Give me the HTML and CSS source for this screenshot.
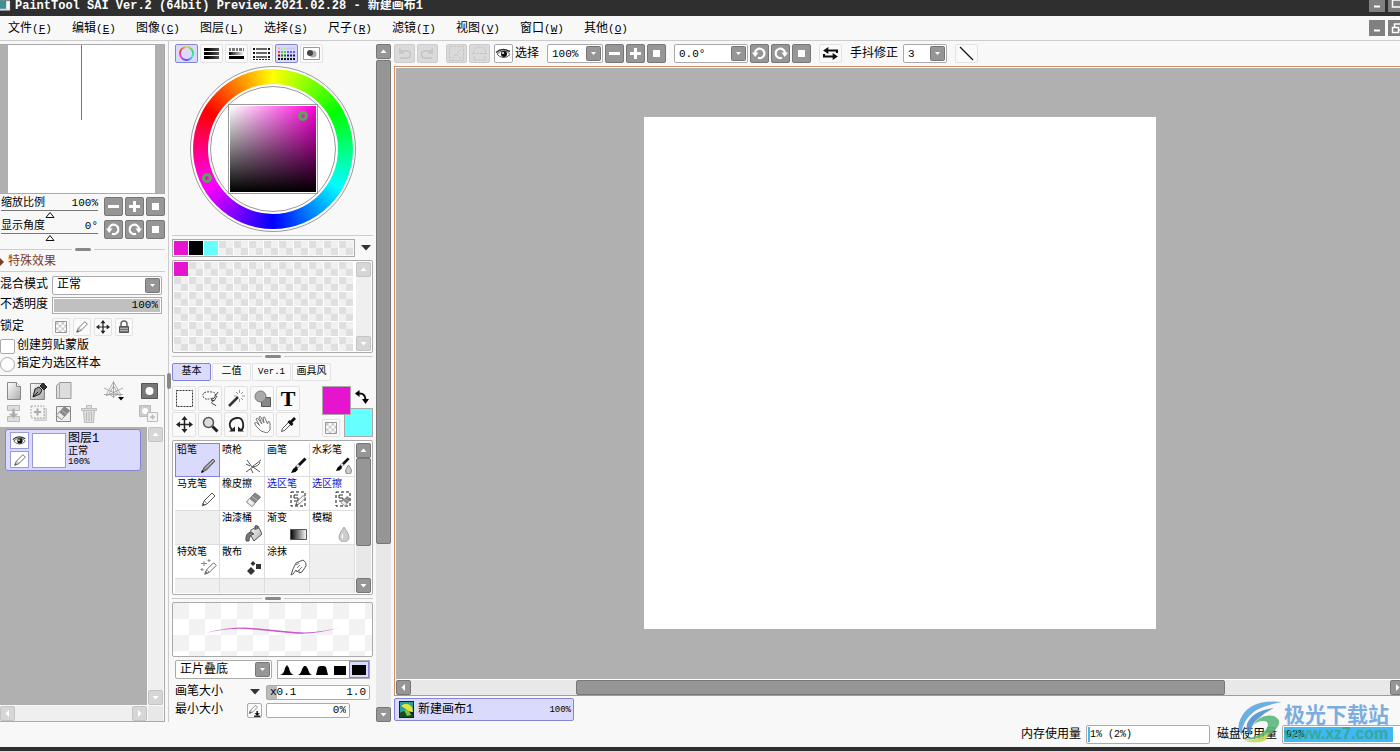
FILE: index.html
```html
<!DOCTYPE html>
<html lang="zh-CN">
<head>
<meta charset="utf-8">
<title>PaintTool SAI Ver.2</title>
<link rel="stylesheet" href="styles.css">
</head>
<body>
<svg class="defs" aria-hidden="true">
  <defs>
    <linearGradient id="steel" x1="0" y1="0" x2="1" y2="1"><stop offset="0" stop-color="#fff"/><stop offset="1" stop-color="#aaa"/></linearGradient>
    <linearGradient id="bw"><stop offset="0" stop-color="#000"/><stop offset="1" stop-color="#fff"/></linearGradient>
    <linearGradient id="ink"><stop offset="0.2" stop-color="#000"/><stop offset="1" stop-color="#555"/></linearGradient>
  </defs>
  <symbol id="minus" viewBox="0 0 17 17"><path d="M3 8.500H14" stroke="#fff" stroke-width="3"/></symbol>
  <symbol id="plus" viewBox="0 0 17 17"><path d="M3 8.500H14M8.500 3V14" stroke="#fff" stroke-width="3"/></symbol>
  <symbol id="reset" viewBox="0 0 17 17"><path d="M5 5h7v7H5z" fill="#fff"/></symbol>
  <symbol id="ccw" viewBox="0 0 17 17"><path d="M4 8A4.700 4.700 0 1 1 7 12.800" fill="none" stroke="#fff" stroke-width="2.200"/><path d="M1 7.500h6.500L4.200 12z" fill="#fff"/></symbol>
  <symbol id="cw" viewBox="0 0 17 17"><path d="M13 8A4.700 4.700 0 1 0 10 12.800" fill="none" stroke="#fff" stroke-width="2.200"/><path d="M16 7.500H9.500L12.800 12z" fill="#fff"/></symbol>
  <symbol id="undo" viewBox="0 0 17 17"><path d="M4 6h7a3 3 0 0 1 0 7H4" fill="none" stroke="#c8c8c8" stroke-width="2"/><path d="M3 2v7h6z" fill="#c8c8c8"/></symbol>
  <symbol id="redo" viewBox="0 0 17 17"><path d="M13 6H6a3 3 0 0 0 0 7h7" fill="none" stroke="#c8c8c8" stroke-width="2"/><path d="M14 2v7H8z" fill="#c8c8c8"/></symbol>
  <symbol id="up" viewBox="0 0 13 13"><path d="M3.500 8h6l-3-3.500z" fill="#fff"/></symbol>
  <symbol id="down" viewBox="0 0 13 13"><path d="M3.500 5h6l-3 3.500z" fill="#fff"/></symbol>
  <symbol id="left" viewBox="0 0 13 13"><path d="M8 3v7L4.500 6.500z" fill="#fff"/></symbol>
  <symbol id="right" viewBox="0 0 13 13"><path d="M5 3v7l3.500-3.500z" fill="#fff"/></symbol>
  <symbol id="caret" viewBox="0 0 10 6"><path d="M0 0h10L5 5.500z" fill="#333"/></symbol>
  <symbol id="eye" viewBox="0 0 17 17"><path d="M2 9Q5 6 9 6t6 3.500Q12 13 8 12.500T2 9z" fill="#fff" stroke="#555"/><circle cx="9" cy="9" r="3" fill="#111"/><circle cx="8" cy="8" r="1" fill="#fff"/><path d="M1 7.500Q7 2 15 6.500" fill="none" stroke="#333" stroke-width="1.500"/></symbol>
  <symbol id="pencil" viewBox="0 0 17 17"><path d="M2.500 14.500l1.500-4.500L12 2l3 3-8 8z" fill="#fff" stroke="#555"/><path d="M2 15l1-3 2 2zM4.500 10l3 3" fill="#333" stroke="#777"/></symbol>
  <symbol id="darkpencil" viewBox="0 0 17 17"><path d="M2 15l2-4.500L13 2l2 2-8.500 9z" fill="#888" stroke="#555"/><path d="M1 16l1-3 2 2z"/><path d="M5.500 11L14 3" stroke="#ccc"/></symbol>
  <symbol id="brush" viewBox="0 0 17 17"><path d="M1 16l2-4 2.500-2L8 12.500 5.500 15z"/><path d="M6 11l9.500-9.500" stroke="#111" stroke-width="3"/><path d="M7 10l2-2" stroke="#ddd" stroke-width="3"/></symbol>
  <symbol id="eraser" viewBox="0 0 17 17"><path d="M1.500 11L10 2l5.500 4-8.500 9.500z" fill="#888" stroke="#777"/><path d="M1.500 11L4.500 7.500l5.500 4.500-3 3.500z" fill="#eee" stroke="#999"/><path d="M7 5.500l5.500 4" stroke="#bbb"/></symbol>
  <symbol id="checker" viewBox="0 0 13 13"><path d="M.5.5h12v12H.5z" fill="#fff" stroke="#888"/><path d="M1 1h3v3H1zM7 1h3v3H7zM4 4h3v3H4zM10 4h2v3h-2zM1 7h3v3H1zM7 7h3v3H7zM4 10h3v2H4zM10 10h2v2h-2z" fill="#ccc"/></symbol>
  <symbol id="move" viewBox="0 0 17 17"><path d="M8.500 2v13M2 8.500h13" stroke="#222" stroke-width="1.500"/><path d="M8.500 0l3 4h-6zM8.500 17l3-4h-6zM0 8.500l4-3v6zM17 8.500l-4-3v6z" fill="#222"/></symbol>
  <symbol id="minimize" viewBox="0 0 16 16"><path d="M5 10.500h6" stroke="#fff" stroke-width="2"/></symbol>
</svg>

<header class="titlebar">
  <svg class="app-icon" viewBox="0 0 12 12"><path d="M0 0h11v11H0z" fill="#ddd"/><path d="M0 0h7v9H0z" fill="#438e91"/><path d="M7 1h3v8H7z" fill="#fff"/></svg>
  <h1 class="title">PaintTool SAI Ver.2 (64bit) Preview.2021.02.28 - 新建画布1</h1>
  <div class="window-buttons">
    <button class="win" aria-label="最小化"><svg viewBox="0 0 16 16"><use href="#minimize"/></svg></button>
    <button class="win" aria-label="还原"><svg viewBox="0 0 16 16"><path d="M4.500 4h9v7h-9z" fill="none" stroke="#fff" stroke-width="1.500"/></svg></button>
  </div>
</header>

<nav class="menubar">
  <button class="menu">文件<span class="key">(<u>F</u>)</span></button>
  <button class="menu">编辑<span class="key">(<u>E</u>)</span></button>
  <button class="menu">图像<span class="key">(<u>C</u>)</span></button>
  <button class="menu">图层<span class="key">(<u>L</u>)</span></button>
  <button class="menu">选择<span class="key">(<u>S</u>)</span></button>
  <button class="menu">尺子<span class="key">(<u>R</u>)</span></button>
  <button class="menu">滤镜<span class="key">(<u>T</u>)</span></button>
  <button class="menu">视图<span class="key">(<u>V</u>)</span></button>
  <button class="menu">窗口<span class="key">(<u>W</u>)</span></button>
  <button class="menu">其他<span class="key">(<u>O</u>)</span></button>
  <div class="window-buttons">
    <button class="win" aria-label="最小化画布"><svg viewBox="0 0 16 16"><use href="#minimize"/></svg></button>
    <button class="win" aria-label="还原画布"><svg viewBox="0 0 16 16"><path d="M6.500 7V4h7v6h-3M4.500 7.500h6v5h-6z" fill="none" stroke="#fff" stroke-width="1.500"/></svg></button>
  </div>
</nav>

<main class="workspace">
  <aside class="layers-column">
    <div class="navigator"><div class="nav-page"><div class="nav-stroke"></div></div></div>
    <div class="nav-row">
      <div class="slider">
        <label for="zoom">缩放比例</label><output>100%</output>
        <input id="zoom" type="range" value="50">
      </div>
      <button class="solid" aria-label="缩小"><svg viewBox="0 0 17 17"><use href="#minus"/></svg></button>
      <button class="solid" aria-label="放大"><svg viewBox="0 0 17 17"><use href="#plus"/></svg></button>
      <button class="solid" aria-label="重置缩放"><svg viewBox="0 0 17 17"><use href="#reset"/></svg></button>
    </div>
    <div class="nav-row">
      <div class="slider">
        <label for="angle">显示角度</label><output>0°</output>
        <input id="angle" type="range" value="50">
      </div>
      <button class="solid" aria-label="逆时针旋转"><svg viewBox="0 0 17 17"><use href="#ccw"/></svg></button>
      <button class="solid" aria-label="顺时针旋转"><svg viewBox="0 0 17 17"><use href="#cw"/></svg></button>
      <button class="solid" aria-label="重置角度"><svg viewBox="0 0 17 17"><use href="#reset"/></svg></button>
    </div>
    <div class="splitter nav-splitter"><span></span></div>
    <button class="effects"><svg viewBox="0 0 4 8"><path d="M0 0l4 4-4 4z" fill="#7c3d27"/></svg>特殊效果</button>
    <div class="field"><label for="blend">混合模式</label><select id="blend"><option>正常</option></select></div>
    <div class="field opacity"><label for="opacity">不透明度</label><input id="opacity" class="meter num" value="100%"></div>
    <div class="field locks"><span class="caption">锁定</span>
      <button class="flat" aria-label="锁定透明度"><svg width="12" height="12"><use href="#checker"/></svg></button>
      <button class="flat" aria-label="锁定绘制"><svg width="14" height="14"><use href="#pencil"/></svg></button>
      <button class="flat" aria-label="锁定移动"><svg width="14" height="14"><use href="#move"/></svg></button>
      <button class="flat" aria-label="全部锁定"><svg width="12" height="14" viewBox="0 0 12 14"><path d="M3 7V4a3 3 0 0 1 6 0v3" fill="none" stroke="#666" stroke-width="1.500"/><path d="M1.500 6.500h9v6h-9z" fill="#777" stroke="#555"/><path d="M2 8.500h8M2 10.500h8" stroke="#aaa"/></svg></button>
    </div>
    <label class="option"><input type="checkbox">创建剪贴蒙版</label>
    <label class="option"><input type="radio">指定为选区样本</label>

    <section class="layer-panel">
      <div class="layer-tools">
        <button aria-label="新建图层"><svg width="16" height="18" viewBox="0 0 16 18"><path d="M1.500.5h9l4 4v13h-13z" fill="url(#steel)" stroke="#888"/><path d="M10.500.5v4h4" fill="#fff" stroke="#888"/></svg></button>
        <button aria-label="新建钢笔图层"><svg width="18" height="18" viewBox="0 0 18 18"><path d="M.5 1.500h14v16H.5z" fill="url(#steel)" stroke="#888"/><path d="M3 15l2-8 4-2 3 3-2 4z" fill="#999" stroke="#222"/><path d="M10 4l3-3 4 4-3 3zM3 15l5-5" fill="#333" stroke="#222"/></svg></button>
        <button aria-label="新建图层组"><svg width="16" height="18" viewBox="0 0 16 18"><path d="M.5 3.500L4 .500h11v16H.5z" fill="#ddd" stroke="#999"/><path d="M3.500 1v16" stroke="#aaa"/></svg></button>
        <span></span>
        <button aria-label="透视尺"><svg width="22" height="20" viewBox="0 0 22 20"><path d="M10.500 0v17M1 13.500h19M10.500 1L3 14M10.500 1L18 14M1 7l17 8M20 7L3 15M10.500 5L6 13l4.500 3 4.500-3z" fill="none" stroke="#999" stroke-width=".8"/><path d="M15 16h6l-3 3.500z"/></svg></button>
        <button class="end" aria-label="图层蒙版"><svg width="17" height="16" viewBox="0 0 17 16"><path d="M.5.5h16v15H.5z" fill="#777" stroke="#555"/><circle cx="8.500" cy="8" r="4" fill="#fff"/></svg></button>
        <button aria-label="向下转写"><svg width="16" height="17" viewBox="0 0 16 17" fill="#ddd" stroke="#bbb"><path d="M1.500.5h12v5h-12zM1.500 11.500h12v5h-12z"/><path d="M6.500 4h2v5h3L7.500 13l-4-4h3z" fill="#aaa"/></svg></button>
        <button aria-label="向下合并"><svg width="17" height="17" viewBox="0 0 17 17"><path d="M4.500 3.500h12v12h-12z" fill="#ddd" stroke="#ccc"/><path d="M1 1h13v12H1z" fill="#f4f4f4" stroke="#aaa" stroke-dasharray="2 1"/><path d="M4 7h7M7.500 3.500v7" stroke="#aaa" stroke-width="2"/></svg></button>
        <button aria-label="清除图层"><svg width="17" height="17" viewBox="0 0 17 17"><path d="M1.500 1.500h14v15h-14z" fill="#eee" stroke="#888"/><use href="#eraser" width="16" height="16"/></svg></button>
        <button aria-label="删除图层"><svg width="16" height="18" viewBox="0 0 16 18" fill="#ddd" stroke="#bbb"><path d="M2.500 5.500h11l-1 12h-9zM.5 3.500h15v2H.5zM5.500 3V.5h5V3M5.500 7v9M8 7v9M10.500 7v9"/></svg></button>
        <span></span>
        <button class="end" aria-label="应用蒙版"><svg width="19" height="17" viewBox="0 0 19 17"><path d="M.5.5h11v11H.5z" fill="#ccc" stroke="#bbb"/><circle cx="6" cy="6" r="3" fill="#fff"/><path d="M8.500 7.500h10v9h-10z" fill="#f4f4f4" stroke="#bbb"/><path d="M11 12h5M13.500 9.500v5" stroke="#bbb" stroke-width="1.500"/></svg></button>
      </div>
      <div class="layer-view">
        <div class="layer-list">
          <div class="layer">
            <div class="layer-flags">
              <button aria-label="显示图层"><svg width="17" height="15"><use href="#eye"/></svg></button>
              <button aria-label="编辑图层"><svg width="14" height="14"><use href="#pencil"/></svg></button>
            </div>
            <div class="thumb"></div>
            <div class="layer-info"><strong>图层1</strong><span>正常</span><span class="tiny">100%</span></div>
          </div>
        </div>
        <div class="vbar pale"><button aria-label="向上"><svg><use href="#up"/></svg></button><i></i><button aria-label="向下"><svg><use href="#down"/></svg></button></div>
        <div class="hbar pale"><button aria-label="向左"><svg><use href="#left"/></svg></button><i></i><button aria-label="向右"><svg><use href="#right"/></svg></button></div>
        <div class="corner"></div>
      </div>
    </section>
    <div class="column-grip"></div>
  </aside>

  <section class="tools-column">
    <div class="tools">
      <div class="color-modes">
        <button class="flat on" aria-label="色轮"><span class="mini-wheel"></span></button>
        <button class="flat" aria-label="RGB滑块"><svg width="17" height="13" viewBox="0 0 17 13"><path d="M1 1h15v3H1zM1 5h15v3H1zM1 9h15v3H1z" fill="url(#ink)"/><path d="M1 4.500h15M1 8.500h15" stroke="#fafafa"/></svg></button>
        <button class="flat" aria-label="HSV滑块"><svg width="17" height="13" viewBox="0 0 17 13"><path d="M1 2.500h15" stroke="#777" stroke-width="3" stroke-dasharray="2 1 3 1"/><path d="M1 5h15v3H1z" fill="url(#bw)"/><path d="M1 9h15v3H1z"/></svg></button>
        <button class="flat" aria-label="中间色"><svg width="19" height="13" viewBox="0 0 19 13"><path d="M1 2h2M16 2h2M1 6h2M16 6h2M1 10h2M16 10h2" stroke="#111" stroke-width="2"/><path d="M4 2h11M4 6h11M4 10h11" stroke="#666" stroke-width="2"/><path d="M1 12.500h17" stroke="#222" stroke-dasharray="2 1"/></svg></button>
        <button class="flat on" aria-label="色板"><svg width="19" height="13" viewBox="0 0 19 13" stroke-width="2" stroke-dasharray="2 1"><path d="M1 1.500h3" stroke="#faa"/><path d="M4 1.500h6" stroke="#bd9"/><path d="M10 1.500h8" stroke="#bbf"/><path d="M1 5h3" stroke="#e44"/><path d="M4 5h6" stroke="#5c4"/><path d="M10 5h8" stroke="#66e"/><path d="M1 8.500h3" stroke="#800"/><path d="M4 8.500h6" stroke="#171"/><path d="M10 8.500h8" stroke="#118"/><path d="M1 12h17" stroke="#111"/></svg></button>
        <button class="flat" aria-label="调色盘"><svg width="17" height="13" viewBox="0 0 17 13"><path d="M.5.5h16v12H.5z" fill="#fff" stroke="#999"/><circle cx="10" cy="7" r="3.500" fill="#aaa"/><circle cx="7" cy="6" r="3" fill="#444"/></svg></button>
      </div>

      <div class="wheel">
        <div class="hue"></div>
        <div class="hub"><div class="shade"></div></div>
        <i class="pick pick-hue"></i><i class="pick pick-shade"></i>
      </div>

      <div class="recent">
        <div class="swatches one"><button class="sw magenta" aria-label="品红"></button><button class="sw black" aria-label="黑"></button><button class="sw cyan" aria-label="青"></button></div>
        <button class="bare" aria-label="色板菜单"><svg width="10" height="6"><use href="#caret"/></svg></button>
      </div>
      <div class="palette">
        <div class="swatches"><button class="sw magenta" aria-label="品红"></button></div>
        <div class="vbar pale"><button aria-label="向上"><svg><use href="#up"/></svg></button><i></i><button aria-label="向下"><svg><use href="#down"/></svg></button></div>
      </div>
      <div class="splitter"><span></span></div>

      <div class="tabs">
        <button class="flat on">基本</button><button class="flat">二值</button><button class="flat latin">Ver.1</button><button class="flat">画具风</button>
      </div>

      <div class="toolbox">
        <div class="tool-grid">
          <button class="flat" aria-label="矩形选区"><svg viewBox="0 0 17 17"><path d="M.5.5h16v16H.5z" fill="none" stroke="#333" stroke-dasharray="2 1"/></svg></button>
          <button class="flat" aria-label="套索"><svg viewBox="0 0 17 17" fill="none" stroke="#444"><path d="M11 8Q2 11 1 6t9-4q5 1 3 4" stroke-dasharray="2 1"/><path d="M16 2l-4 6-3 2 3 1 3-5M12 10q-4 3-1 4t3 2"/></svg></button>
          <button class="flat" aria-label="魔棒"><svg viewBox="0 0 17 17"><path d="M1 16l9-9" stroke="#333" stroke-width="2.500"/><path d="M11.500 0v3M11.500 9v3M6 6h3M14 6h3M8 2l2 2M15 2l-2 2M13 8l2 2" stroke="#999"/></svg></button>
          <button class="flat" aria-label="形状"><svg viewBox="0 0 17 17"><path d="M7.500 7.500h9v9h-9z" fill="#888" stroke="#555"/><circle cx="6.500" cy="6.500" r="5.500" fill="#aaa" stroke="#777"/></svg></button>
          <button class="flat text-tool" aria-label="文字">T</button>
          <button class="flat" aria-label="移动"><svg><use href="#move"/></svg></button>
          <button class="flat" aria-label="缩放"><svg viewBox="0 0 17 17"><circle cx="6.500" cy="6.500" r="5" fill="#ddd" stroke="#555" stroke-width="1.500"/><path d="M10.500 10.500l5 5" stroke="#222" stroke-width="3"/></svg></button>
          <button class="flat" aria-label="旋转"><svg viewBox="0 0 17 17"><path d="M4.500 14.500Q1 11 2 7t6.500-5T15 7t-2.500 7.500" fill="none" stroke="#222" stroke-width="1.800"/><path d="M1 15.500h6v-5zM16 15.500h-6v-5z" fill="#222"/></svg></button>
          <button class="flat" aria-label="抓手"><svg viewBox="0 0 17 17"><path d="M7 15L2 10 0.500 7l2-.500 3 3L2 3l1.500-1L8 8 5 1l1.500-.500L10 7 9 1.500l1.500-.500 3 7 1-3 1.500 2v7l-3 3z" fill="#fff" stroke="#777"/></svg></button>
          <button class="flat" aria-label="吸管"><svg viewBox="0 0 17 17"><path d="M1.500 15.500l1-3L10 5l2 2-7.500 7.500z" fill="#fff" stroke="#555"/><path d="M8.500 5l4 4M11 6l4-4" stroke="#111" stroke-width="3"/></svg></button>
        </div>
        <div class="colors">
          <button class="primary magenta" aria-label="前景色"></button>
          <button class="bare swap" aria-label="交换颜色"><svg width="14" height="14" viewBox="0 0 14 14"><path d="M3 3.500h2q5 0 5.500 6" fill="none" stroke="#111" stroke-width="2"/><path d="M0 3.500L4.500 0v7zM7 9h7l-3.500 5z"/></svg></button>
          <button class="flat clear" aria-label="透明色"><svg width="12" height="12"><use href="#checker"/></svg></button>
          <button class="secondary cyan" aria-label="背景色"></button>
        </div>
      </div>

      <div class="brushes">
        <div class="brush-grid">
          <button class="brush on">铅笔<svg><use href="#darkpencil"/></svg></button>
          <button class="brush">喷枪<svg viewBox="0 0 17 17"><path d="M2 3l5 7 9-7M1 15l7-5 7 5M5 9l-4-2M8 10q6-1 7-5M6 12l2 4" fill="none" stroke="#555"/></svg></button>
          <button class="brush">画笔<svg><use href="#brush"/></svg></button>
          <button class="brush">水彩笔<svg viewBox="0 0 17 17"><use href="#brush" width="15" height="15"/><path d="M13.500 8q-3 4-3 6a3 3 0 0 0 6 0q0-2-3-6z" fill="#ccc" stroke="#888"/></svg></button>
          <button class="brush">马克笔<svg><use href="#pencil"/></svg></button>
          <button class="brush">橡皮擦<svg><use href="#eraser"/></svg></button>
          <button class="brush blue">选区笔<svg viewBox="0 0 17 17"><path d="M1 1h14v14H1z" fill="none" stroke="#111" stroke-dasharray="3 2"/><path d="M8 4H4v3h4v3H4" fill="none" stroke="#333"/><use href="#pencil" x="4" y="3" width="13" height="13"/></svg></button>
          <button class="brush blue">选区擦<svg viewBox="0 0 17 17"><path d="M1 1h14v14H1z" fill="none" stroke="#111" stroke-dasharray="3 2"/><path d="M8 4H4v3h4v3H4" fill="none" stroke="#333"/><use href="#eraser" x="5" y="4" width="12" height="12"/></svg></button>
          <span class="brush empty"></span>
          <button class="brush">油漆桶<svg viewBox="0 0 17 17"><path d="M6 5l7-4 4 8-8 7-4-7z" fill="url(#steel)" stroke="#555"/><path d="M1 16q-1-8 5-9l3 2q-5 1-5 7zM10 5V1q3-2 3 3" fill="#777" stroke="#555"/></svg></button>
          <button class="brush">渐变<svg viewBox="0 0 17 17"><path d="M.5 4.500h16v10H.5z" fill="url(#bw)" stroke="#555"/></svg></button>
          <button class="brush">模糊<svg viewBox="0 0 17 17"><path d="M9 2Q4 9 4 12a5 5 0 0 0 10 0Q14 9 9 2z" fill="#ccc" stroke="#aaa"/><path d="M8 8q-3 4 0 6z" fill="#fff"/></svg></button>
          <button class="brush">特效笔<svg viewBox="0 0 17 17"><use href="#pencil" x="3" y="2" width="15" height="15"/><path d="M4 2v5M1 4.500h6M9 0v3M7.500 1.500h3M2 9v3M.5 10.500h3" stroke="#888"/></svg></button>
          <button class="brush">散布<svg viewBox="0 0 17 17"><path d="M6 8l4 4-4 4-4-4zM8 2l2.500 2.500L8 7 5.500 4.500zM11 5h5v5h-5z" fill="#333"/></svg></button>
          <button class="brush">涂抹<svg viewBox="0 0 17 17"><path d="M1 16l2-6 3-6 7-3q4 2 3 6l-4 6-3 1v-3l-2 2-1-2-3 4z" fill="#fff" stroke="#555"/><path d="M7 9l3-3M9 11l3-3M6 6l3-2" stroke="#777"/></svg></button>
          <span class="brush empty"></span>
          <span class="brush empty"></span><span class="brush empty"></span><span class="brush empty"></span><span class="brush empty"></span>
        </div>
        <div class="vbar"><button aria-label="向上"><svg><use href="#up"/></svg></button><i class="grip brush-thumb"></i><i></i><button aria-label="向下"><svg><use href="#down"/></svg></button></div>
      </div>
      <div class="splitter"><span></span></div>

      <div class="preview"><svg viewBox="0 0 136 10"><path d="M0 8Q28 1 48 3T90 7T136 2Q110 10 90 8.500T48 4.500T0 8z" fill="#c957c9"/></svg></div>
      <div class="brush-shape">
        <select aria-label="混合"><option>正片叠底</option></select>
        <div class="edges">
          <button aria-label="边缘1"><svg viewBox="0 0 14 10"><path d="M0 10q4-1 5-7l2-3 2 3q1 6 5 7z"/></svg></button>
          <button aria-label="边缘2"><svg viewBox="0 0 14 10"><path d="M0 10q3-1 4-6l2-3h2l2 3q1 5 4 6z"/></svg></button>
          <button aria-label="边缘3"><svg viewBox="0 0 14 10"><path d="M1 10l2-8 2-1h4l2 1 2 8z"/></svg></button>
          <button aria-label="边缘4"><svg viewBox="0 0 14 10"><path d="M1 1h12v9H1z"/></svg></button>
          <button class="on" aria-label="边缘5"><svg viewBox="0 0 14 10"><path d="M0 0h14v10H0z"/></svg></button>
        </div>
      </div>
      <div class="size-row"><label for="size">画笔大小</label><button class="bare" aria-label="大小倍率"><svg width="10" height="6"><use href="#caret"/></svg></button><span class="size-box num"><span class="scale">x0.1</span><input id="size" value="1.0"></span></div>
      <div class="size-row"><label for="minsize">最小大小</label><button class="flat pressure" aria-label="笔压"><svg width="13" height="13" viewBox="0 0 17 17"><use href="#pencil" width="14" height="14"/><path d="M12 9v4M8 16h8" stroke="#222" stroke-width="2"/><path d="M8.500 12h7L12 15.500z"/></svg></button><input id="minsize" class="min-box num" value="0%"></div>
    </div>
    <div class="vbar column-bar"><button aria-label="向上"><svg><use href="#up"/></svg></button><i class="grip"></i><i></i><button aria-label="向下"><svg><use href="#down"/></svg></button></div>
  </section>

  <section class="canvas-column">
    <div class="toolbar">
      <div class="group"><button class="disabled" aria-label="撤销"><svg><use href="#undo"/></svg></button><button class="disabled" aria-label="重做"><svg><use href="#redo"/></svg></button></div>
      <div class="group"><button class="disabled" aria-label="取消选择"><svg viewBox="0 0 17 17"><path d="M1.500 1.500h14v14h-14zM4 14l9-10M8 9l5 5" fill="none" stroke="#c4c4c4" stroke-dasharray="3 1"/></svg></button><button class="disabled" aria-label="反转选择"><svg viewBox="0 0 17 17"><path d="M2.500 8.500Q2 2 8.500 2t6 6.500M1 8.500h15M3 11v4h11v-4" fill="none" stroke="#c4c4c4" stroke-dasharray="3 1"/></svg></button></div>
      <label class="show-selection"><button class="boxed" aria-label="显示选择"><svg><use href="#eye"/></svg></button>选择</label>
      <div class="group tight"><select class="num zoom-select" aria-label="缩放"><option>100%</option></select>
        <button class="solid" aria-label="缩小画布"><svg viewBox="0 0 17 17"><use href="#minus"/></svg></button><button class="solid" aria-label="放大画布"><svg viewBox="0 0 17 17"><use href="#plus"/></svg></button><button class="solid" aria-label="重置画布缩放"><svg viewBox="0 0 17 17"><use href="#reset"/></svg></button></div>
      <div class="group tight"><select class="num angle-select" aria-label="角度"><option>0.0°</option></select>
        <button class="solid" aria-label="向左旋转"><svg viewBox="0 0 17 17"><use href="#ccw"/></svg></button><button class="solid" aria-label="向右旋转"><svg viewBox="0 0 17 17"><use href="#cw"/></svg></button><button class="solid" aria-label="重置画布角度"><svg viewBox="0 0 17 17"><use href="#reset"/></svg></button></div>
      <button class="flat wide" aria-label="水平翻转"><svg width="15" height="13" viewBox="0 0 17 15"><path d="M4 4h12v3M13 11H1V8" fill="none" stroke="#111" stroke-width="2.500"/><path d="M0 4l6-4v8zM17 11l-6-4v8z" fill="#111"/></svg></button>
      <div class="stabilizer"><label for="stab">手抖修正</label><select id="stab" class="num"><option>3</option></select></div>
      <button class="flat wide line-tool" aria-label="直线"><svg width="17" height="15" viewBox="0 0 17 15"><path d="M2 1l13 13" stroke="#111" stroke-width="1.200"/></svg></button>
    </div>
    <div class="viewport">
      <div class="stage"><div class="sheet"></div></div>
      <div class="hbar canvas-bar"><button aria-label="向左"><svg><use href="#left"/></svg></button><i class="before"></i><i class="grip"></i><i></i><button aria-label="向右"><svg><use href="#right"/></svg></button></div>
    </div>
    <div class="documents">
      <button class="document"><svg width="15" height="17" viewBox="0 0 15 17"><path d="M0 0h15v17H0z" fill="#123"/><path d="M1 1h13v10Q8 8 1 12z" fill="#2a9d9d"/><path d="M2 5q6-5 11 1l1 5q-5 0-7-3z" fill="#e6e33a"/><path d="M1 12q6-4 13 2v2H1z" fill="#184d1e"/><path d="M5 9q5-1 7 5l-4 1z" fill="#7ac943"/></svg><span>新建画布1</span><span class="doc-zoom">100%</span></button>
    </div>
  </section>
</main>

<footer class="status">
  <span>内存使用量</span><div class="gauge memory"><i style="width:2%"></i><b>1% (2%)</b></div>
  <span>磁盘使用量</span><div class="gauge disk"><i style="width:92%"></i><b>92%</b></div>
  <div class="brand">
    <svg width="46" height="42" viewBox="0 0 46 42"><path d="M44 1Q14-2 4 15Q-3 27 4 34Q3 20 17 10Q27 4 44 1z" fill="#5aa5e0"/><path d="M36 7Q14 10 9 23q-2 8 4 11q-1-11 8-17Q27 11 36 7z" fill="#4b8fd0"/><path d="M14 25q8-13 22-10q10 5 1 14Q29 38 4 39q20-4 25-12q3-7-4-7q-6 0-11 5z" fill="#58b778"/><path d="M5 40q18-1 26-9l-3 8q-7 4-23 1z" fill="#c8d94a"/></svg>
    <div><strong>极光下载站</strong><em>www.xz7.com</em></div>
  </div>
</footer>
<div class="taskbar"></div>
</body>
</html>
```

FILE: styles.css
```css
* { box-sizing: border-box; }
body {
  margin: 0;
  min-height: 100vh;
  display: flex;
  flex-direction: column;
  overflow: hidden;
  background: #f8f8f8;
  color: #000;
  font: 12px/16px "Liberation Mono", "Noto Sans CJK SC", monospace;
}
button, input, select { font: inherit; color: inherit; margin: 0; padding: 0; border: 0; background: none; border-radius: 0; }
svg { display: block; flex: none; }
label, button, span { white-space: nowrap; }
i { font-style: normal; }
.defs { position: absolute; width: 0; height: 0; }
.num { font-size: 11px; }
.magenta { background: #e613cf; }
.black { background: #000; }
.cyan { background: #6ff; }

/* title and menus */
.titlebar { height: 16px; display: flex; align-items: flex-start; background: #2f2f2f; color: #fff; overflow: hidden; }
.app-icon { width: 11px; height: 12px; }
.title { margin: -3px 0 0 4px; font-size: 12px; line-height: 18px; font-weight: bold; white-space: nowrap; }
.titlebar .window-buttons { margin-top: -4px; }
.window-buttons { display: flex; gap: 3px; margin-left: auto; margin-right: -4px; }
.win { width: 16px; height: 16px; background: #808080; }
.menubar { height: 25px; display: flex; align-items: center; padding-left: 8px; border-bottom: 1px solid #ccc; }
.menu { width: 64px; text-align: left; padding-top: 2px; }
.key { font-size: 11px; }

.workspace { flex: 1; display: grid; grid-template-columns: 169px 225px minmax(0, 1fr); }

/* shared buttons */
.solid { width: 19px; height: 19px; flex: none; border: 1px solid #777; border-radius: 2px; background: #969696; }
.flat { display: flex; align-items: center; justify-content: center; border: 1px solid #e2e2e2; border-radius: 2px; background: #fafafa; }
.flat.on, .brush.on { border: 1px solid #8484d6; background: #dadafc; }
.bare { display: flex; align-items: center; justify-content: center; }
select {
  appearance: none;
  height: 19px;
  padding: 0 18px 0 4px;
  border: 1px solid #aaa;
  border-radius: 2px;
  background: #fff url("data:image/svg+xml,%3Csvg xmlns='http://www.w3.org/2000/svg' width='15' height='15'%3E%3Crect x='.5' y='.5' width='14' height='14' rx='1' fill='%23969696' stroke='%23777'/%3E%3Cpath d='M5 6h5l-2.500 3z' fill='%23fff'/%3E%3C/svg%3E") no-repeat right 1px center;
}

/* scroll bars */
.vbar, .hbar { display: flex; background: #e8e8e8; }
.vbar { width: 15px; flex: none; flex-direction: column; }
.hbar { height: 15px; }
.vbar i, .hbar i { flex: 1; }
.vbar button, .hbar button { width: 15px; height: 15px; flex: none; border: 1px solid #777; border-radius: 2px; background: #969696; }
.vbar svg, .hbar svg { width: 13px; height: 13px; }
.vbar.pale, .hbar.pale { background: #efefef; }
.pale button { border-color: #c4c4c4; background: #d6d6d6; }
.vbar .grip, .hbar .grip { background: #969696; border: 1px solid #777; border-radius: 2px; }
.splitter { height: 6px; display: flex; align-items: center; gap: 3px; }
.splitter::before, .splitter::after { content: ""; flex: 1; height: 1px; background: #ccc; }
.splitter span { width: 16px; height: 3px; border-radius: 2px; background: #888; }

/* left column */
.layers-column { position: relative; display: flex; flex-direction: column; padding: 3px 3px 0 0; border-right: 1px solid #ccc; }
.navigator { height: 150px; border: solid #aaa; border-width: 1px 1px 1px 0; background: #b0b0b0; padding: 0 9px 0 8px; display: flex; }
.nav-page { flex: 1; background: #fff; display: flex; justify-content: center; }
.nav-stroke { width: 1px; height: 75px; background: #777; }
.nav-row { display: flex; gap: 2px; height: 19px; margin-top: 3px; }
.nav-row + .nav-row { margin-top: 4px; }
.slider { width: 98px; margin-right: 4px; display: grid; grid-template: 13px 8px / 1fr auto; padding-left: 1px; font-size: 11px; line-height: 13px; }
.slider input { grid-column: 1 / 3; display: block; width: 100%; height: 8px; appearance: none; background: linear-gradient(#777, #777) no-repeat 0 0 / 100% 1px; }
.slider input::-webkit-slider-thumb { appearance: none; width: 10px; height: 7px; background: url("data:image/svg+xml,%3Csvg xmlns='http://www.w3.org/2000/svg' width='10' height='7'%3E%3Cpath d='M1 6.500h8L5 1.500z' fill='%23fff' stroke='%23111'/%3E%3C/svg%3E"); }
.nav-splitter { margin-top: 7px; }
.effects { height: 20px; display: flex; align-items: center; gap: 4px; color: #7c3d27; border-bottom: 1px solid #ccc; margin-bottom: 3px; }
.effects svg { width: 4px; height: 8px; }
.field { display: grid; grid-template-columns: 48px minmax(0, 1fr); column-gap: 4px; align-items: center; height: 20px; padding-right: 3px; }
.meter { width: 100%; height: 17px; border: 1px solid #aaa; padding-right: 3px; text-align: right; background: #c0c0c0; box-shadow: inset 0 0 0 1px #fff; }
.locks { display: flex; gap: 3px; height: 21px; margin-top: 1px; }
.caption { width: 49px; }
.locks .flat { width: 18px; height: 18px; }
.option { height: 18px; display: flex; align-items: center; gap: 2px; }
.option input { appearance: none; width: 15px; height: 15px; border: 1px solid #aaa; border-radius: 2px; background: #fff; }
.option input[type="radio"] { border-radius: 50%; }
.layer-panel { flex: 1; margin-top: 2px; border: solid #aaa; border-width: 1px 1px 1px 0; display: flex; flex-direction: column; }
.layer-tools { display: grid; grid-template-columns: repeat(5, 25px) 1fr; grid-auto-rows: 23px; padding: 3px 6px 2px 1px; }
.layer-tools button { display: flex; align-items: center; justify-content: center; }
.layer-tools .end { justify-content: flex-end; }
.layer-view { flex: 1; display: grid; grid-template: 1fr 15px / 1fr 15px; gap: 1px; padding-right: 1px; }
.layer-list { background: #b0b0b0; padding: 2px 6px 0 5px; }
.layer { height: 42px; display: flex; align-items: center; border: 1px solid #8484d6; border-radius: 3px; background: #dadafc; padding: 0 4px; }
.layer-flags { display: flex; flex-direction: column; gap: 2px; margin-right: 3px; }
.layer-flags button { width: 19px; height: 17px; display: flex; align-items: center; justify-content: center; border: 1px solid #9a9ad8; background: #fff; }
.thumb { width: 34px; height: 35px; border: 1px solid #9a9ad8; background: #fff; margin-right: 2px; }
.layer-info { display: flex; flex-direction: column; font-size: 10px; line-height: 11px; }
.layer-info strong { font-size: 12px; line-height: 14px; font-weight: normal; }
.layer-info .tiny { font-size: 9px; }
.corner { background: #e8e8e8; }
.column-grip { position: absolute; right: -3px; top: 332px; width: 4px; height: 16px; border-radius: 2px; background: #888; }

/* tools column */
.tools-column { display: grid; grid-template-columns: minmax(0, 1fr) 15px; gap: 3px; padding: 3px 3px 0; }
.tools { display: flex; flex-direction: column; min-width: 0; }
.color-modes { display: flex; gap: 2px; padding-left: 3px; }
.color-modes .flat { width: 23px; height: 19px; }
.mini-wheel { width: 15px; height: 15px; border-radius: 50%; background: radial-gradient(circle, #dadafc 5px, transparent 6px), conic-gradient(#dd4, #4d4 60deg, #4dd 120deg, #55e 180deg, #d4d 240deg, #e44 300deg, #dd4); }
.wheel { position: relative; align-self: center; width: 166px; height: 166px; margin-top: 3px; border: 1px solid #999; border-radius: 50%; background: #fff; padding: 2px; display: grid; place-items: center; }
.hue, .hub { grid-area: 1 / 1; }
.hue { width: 160px; height: 160px; border-radius: 50%; background: conic-gradient(#ff0, #0f0 60deg, #0ff 120deg, #00f 180deg, #f0f 240deg, #f00 300deg, #ff0); }
.hub { width: 126px; height: 126px; border: 1px solid #999; border-radius: 50%; background: #fff; box-shadow: 0 0 0 2px #fff; display: grid; place-items: center; }
.shade { width: 90px; height: 90px; border: 1px solid #999; padding: 1px; background: linear-gradient(to top, #000, transparent) content-box, linear-gradient(to right, #fff, #ff00dc) content-box, #fff; }
.pick { position: absolute; width: 10px; height: 10px; border: 3px solid #55a854; border-radius: 50%; }
.pick-hue { left: 11px; top: 106px; }
.pick-shade { left: 107px; top: 44px; }
.recent { margin-top: 3px; padding-top: 3px; border-top: 1px solid #ccc; display: flex; gap: 5px; }
.recent .bare { width: 11px; }
.swatches {
  flex: 1; display: flex; gap: 1px; align-items: flex-start;
  background: #fff url("data:image/svg+xml,%3Csvg xmlns='http://www.w3.org/2000/svg' width='15' height='15'%3E%3Cpath d='M0 0h14v14H0z' fill='%23f0f0f0'/%3E%3Cpath d='M0 0h7v7H0zM7 7h7v7H7z' fill='%23dfdfdf'/%3E%3C/svg%3E") content-box;
}
.one { flex: none; width: 183px; height: 18px; border: 1px solid #aaa; padding: 1px; }
.sw { width: 14px; height: 14px; }
.palette { height: 93px; margin-top: 3px; border: 1px solid #aaa; border-radius: 2px; padding: 1px; background: #fff; display: flex; gap: 2px; }
.tools > .splitter { height: 7px; }
.tabs { display: flex; gap: 1px; margin-top: 3px; font-size: 10px; line-height: 14px; }
.tabs .flat { width: 39px; height: 18px; }
.tabs .latin { font-size: 9px; }
.toolbox { display: flex; justify-content: space-between; margin-top: 5px; }
.tool-grid { display: grid; grid-template-columns: repeat(5, 24px); grid-auto-rows: 25px; gap: 1px 2px; }
.tool-grid svg { width: 17px; height: 17px; }
.text-tool { font: bold 22px/22px "Liberation Serif", serif; }
.colors { width: 51px; display: grid; grid-template: 22px 7px 22px / 22px 7px 22px; }
.primary, .secondary { border: 1px solid #aaa; }
.primary { grid-area: 1 / 1 / 3 / 3; z-index: 1; }
.secondary { grid-area: 2 / 2 / 4 / 4; }
.swap { grid-area: 1 / 3; }
.clear { grid-area: 3 / 1; width: 18px; height: 18px; align-self: end; }
.brushes { height: 155px; margin-top: 3px; padding: 2px 1px 1px 2px; border: 1px solid #aaa; border-radius: 2px; background: #fff; display: flex; justify-content: space-between; }
.brush-grid { display: grid; grid-template-columns: repeat(4, 45px); grid-auto-rows: 34px; overflow: hidden; }
.brush { display: flex; flex-direction: column; align-items: flex-start; padding: 1px 0 0 2px; border: solid #ddd; border-width: 0 1px 1px 0; background: #fff; font-size: 10px; line-height: 13px; }
.brush svg { width: 17px; height: 17px; align-self: flex-end; margin-right: 2px; }
.brush.on { padding-top: 0; padding-left: 1px; }
.brush.blue { color: #11c; }
.brush.empty { background: #efefef; }
.vbar .brush-thumb { flex: none; height: 88px; }
.preview { height: 55px; border: 1px solid #aaa; border-radius: 2px; padding: 1px; display: grid; place-items: center; background: repeating-conic-gradient(#fff 0 25%, #f2f2f2 0 50%) 0 0 / 32px 32px; }
.preview svg { width: 136px; height: 10px; }
.brush-shape { display: flex; gap: 5px; margin: 3px 3px 4px; }
.brush-shape select { width: 97px; }
.edges { flex: 1; min-width: 0; height: 19px; border: 1px solid #aaa; background: #fff; display: flex; align-items: center; }
.edges button { flex: 1; min-width: 0; height: 17px; display: grid; place-items: center; }
.edges svg { width: 14px; height: 10px; }
.edges .on { border: 1px solid #8484d6; background: #dadafc; }
.size-row { height: 18px; display: grid; grid-template-columns: 68px 15px minmax(0, 1fr); column-gap: 4px; align-items: center; padding: 0 3px; }
.size-box, .min-box { height: 15px; border: 1px solid #aaa; border-radius: 2px; background: #fff; line-height: 13px; }
.size-box { display: flex; }
.scale { padding-left: 3px; background: linear-gradient(#bbb, #bbb) no-repeat 0 0 / 10px 100%; }
.size-box input { flex: 1; min-width: 0; text-align: right; padding-right: 3px; }
.min-box { width: 84px; text-align: right; padding-right: 3px; }
.pressure { width: 15px; height: 15px; border-color: #aaa; }
.column-bar { gap: 1px; }
.column-bar .grip { flex: 3 0 0; }

/* canvas column */
.canvas-column { display: flex; flex-direction: column; padding-top: 3px; min-width: 0; }
.toolbar { display: flex; align-items: center; height: 19px; gap: 8px; margin-bottom: 3px; }
.group { display: flex; gap: 2px; }
.disabled { width: 21px; height: 19px; display: grid; place-items: center; border: 1px solid #ccc; border-radius: 2px; background: #dadada; }
.toolbar .disabled svg, .boxed svg { width: 17px; height: 17px; }
.show-selection { display: flex; align-items: center; gap: 2px; margin-left: -4px; }
.boxed { width: 19px; height: 19px; border: 1px solid #aaa; border-radius: 2px; background: #fff; }
.zoom-select { width: 56px; }
.angle-select { width: 74px; }
.wide { width: 23px; height: 19px; }
.stabilizer { display: flex; align-items: center; gap: 5px; }
.stabilizer select { width: 44px; }
.viewport { flex: 1; display: flex; flex-direction: column; border: solid #cc8f6a; border-width: 1px 0 1px 1px; padding: 1px 0 0 1px; background: #fff; }
.stage { flex: 1; display: grid; place-items: center; padding: 0 0 2px 3px; background: #b0b0b0; overflow: hidden; }
.sheet { width: 512px; height: 512px; background: #fff; }
.canvas-bar { margin: 1px -5px 0 0; }
.hbar .before { flex: 165; }
.hbar.canvas-bar .grip { flex: 648; }
.hbar.canvas-bar i:last-of-type { flex: 165; }
.documents { height: 26px; padding-top: 2px; }
.document { width: 180px; height: 23px; display: flex; align-items: center; gap: 4px; padding: 0 2px 0 4px; border: 1px solid #8484d6; border-radius: 2px; background: #dadafc; }
.doc-zoom { margin-left: auto; font-size: 9px; }

/* status */
.status { position: relative; height: 25px; display: flex; align-items: center; justify-content: flex-end; gap: 5px; }
.gauge { height: 19px; border: 1px solid #aaa; border-radius: 2px; padding: 1px; background: #fff; display: grid; }
.gauge i, .gauge b { grid-area: 1 / 1; }
.gauge i { background: #3fb8f8; }
.gauge b { padding-left: 2px; font-weight: normal; font-size: 10px; line-height: 15px; }
.memory { width: 124px; margin-right: 2px; }
.disk { width: 123px; margin-right: -5px; }
.brand { position: absolute; right: 10px; bottom: 4px; display: flex; align-items: center; color: #6ba3dc; opacity: .88; }
.brand div { display: flex; flex-direction: column; width: 106px; }
.brand strong { font: bold 21px/24px "Noto Sans CJK SC", sans-serif; }
.brand em { font: bold 16px/18px "Liberation Sans", sans-serif; color: #36a789; }
.taskbar { height: 5px; background: #2f2f2f; border-bottom: 1px solid #ddd; }
```
